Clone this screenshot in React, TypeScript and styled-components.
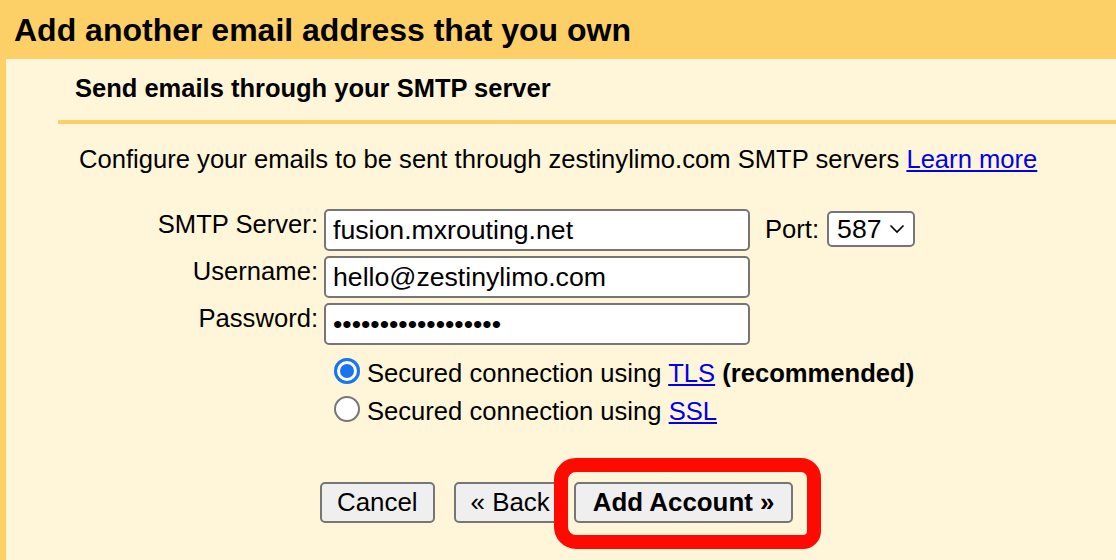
import React from "react";
import styled, { createGlobalStyle } from "styled-components";

const Global = createGlobalStyle`
  html, body { margin: 0; padding: 0; background: #fff6d9; }
  body { font-family: "Liberation Sans", Arial, sans-serif; color: #000; }
  * { box-sizing: border-box; }
`;

const Page = styled.div`
  width: 1116px;
  height: 560px;
  overflow: hidden;
  display: flex;
  flex-direction: column;
  background: #fff6d9;
`;

const TitleBar = styled.div`
  height: 59px;
  flex: none;
  background: #fcd067;
  padding: 2px 0 0 14px;
`;

const Title = styled.h1`
  margin: 0;
  font-size: 32px;
  line-height: 57px;
  font-weight: bold;
  white-space: nowrap;
`;

const Body = styled.div`
  flex: 1;
  border-left: 6px solid #fcd067;
  display: flex;
  flex-direction: column;
`;

const SectionHeader = styled.h2`
  margin: 0 0 0 52px;
  height: 65px;
  padding: 0 0 2px 17px;
  font-size: 25.5px;
  line-height: 59px;
  font-weight: bold;
  border-bottom: 4px solid #fcd067;
  white-space: nowrap;
`;

const Intro = styled.p`
  margin: 20px 0 0 73px;
  font-size: 25.6px;
  line-height: 30px;
  white-space: nowrap;
`;

const Link = styled.a`
  color: #0000ee;
  text-decoration: underline;
  text-underline-offset: 2px;
  cursor: pointer;
`;

const FormGrid = styled.div`
  margin-top: 35px;
  display: grid;
  grid-template-columns: 312px 426px auto;
  column-gap: 6px;
  row-gap: 5px;
  align-items: start;
`;

const Label = styled.label`
  font-size: 25.6px;
  line-height: 30px;
  text-align: right;
  white-space: nowrap;
`;

const TextInput = styled.input`
  width: 426px;
  height: 42px;
  margin: 0;
  padding: 0 7px;
  border: 2px solid #767676;
  border-radius: 5px;
  background: #fff;
  font-family: "Liberation Sans", Arial, sans-serif;
  font-size: 26.67px;
  color: #000;
  outline: none;
`;

const PortGroup = styled.div`
  display: flex;
  align-items: center;
  gap: 8px;
  margin: 2px 0 0 9px;
  font-size: 25.6px;
  height: 36px;
`;

const SelectBox = styled.div`
  width: 88px;
  height: 36px;
  display: flex;
  align-items: center;
  justify-content: space-between;
  padding: 0 8px 0 8px;
  border: 2px solid #767676;
  border-radius: 5px;
  background: #fff;
  font-size: 26.67px;
`;

const RadioList = styled.div`
  margin: 9px 0 0 328px;
  display: flex;
  flex-direction: column;
`;

const RadioRow = styled.label`
  display: flex;
  align-items: center;
  height: 38px;
  font-size: 25.6px;
  white-space: nowrap;
`;

const RadioDot = styled.span<{ $checked?: boolean }>`
  width: 26px;
  height: 26px;
  flex: none;
  margin: -4px 7px 0 0;
  border-radius: 50%;
  background: ${(p) => (p.$checked ? "#1a73f0" : "#fff")};
  border: ${(p) => (p.$checked ? "none" : "2.5px solid #767676")};
  box-shadow: ${(p) => (p.$checked ? "inset 0 0 0 3px #1a73f0, inset 0 0 0 6px #fff" : "none")};
`;

const RadioText = styled.span`
  line-height: 38px;
`;

const Strong = styled.b`
  font-weight: bold;
`;

const ButtonRow = styled.div`
  margin: 52px 0 0 314px;
  display: flex;
  align-items: center;
`;

const Button = styled.button<{ $bold?: boolean; $gap?: number }>`
  height: 41px;
  margin: 0 0 0 ${(p) => p.$gap ?? 0}px;
  padding: 0 ${(p) => (p.$bold ? 17 : 15)}px;
  border: 2px solid #767676;
  border-radius: 5px;
  background: #efefef;
  font-family: "Liberation Sans", Arial, sans-serif;
  font-size: 25.9px;
  font-weight: ${(p) => (p.$bold ? "bold" : "normal")};
  color: #000;
  white-space: nowrap;
  cursor: pointer;
`;

const Highlight = styled.span`
  position: relative;
  display: inline-flex;
  margin-left: 7px;
`;

const RedMark = styled.span`
  position: absolute;
  left: -20px;
  top: -24px;
  right: -28px;
  bottom: -26px;
  border: 14px solid #fe0a00;
  border-radius: 22px 20px 18px 22px;
  pointer-events: none;
`;

export default function App() {
  return (
    <>
      <Global />
      <Page>
        <TitleBar>
          <Title>Add another email address that you own</Title>
        </TitleBar>
        <Body>
          <SectionHeader>Send emails through your SMTP server</SectionHeader>
          <Intro>
            Configure your emails to be sent through zestinylimo.com SMTP servers <Link>Learn more</Link>
          </Intro>
          <FormGrid>
            <Label>SMTP Server:</Label>
            <TextInput readOnly value="fusion.mxrouting.net" />
            <PortGroup>
              <span>Port:</span>
              <SelectBox>
                <span>587</span>
                <svg width="16" height="10" viewBox="0 0 16 10">
                  <polyline points="1.5,1.5 8,8 14.5,1.5" fill="none" stroke="#000" strokeWidth="1.6" />
                </svg>
              </SelectBox>
            </PortGroup>
            <Label>Username:</Label>
            <TextInput readOnly value="hello@zestinylimo.com" />
            <span />
            <Label>Password:</Label>
            <TextInput readOnly type="password" value="xxxxxxxxxxxxxxxxxx" />
            <span />
          </FormGrid>
          <RadioList>
            <RadioRow>
              <RadioDot $checked />
              <RadioText>
                Secured connection using <Link>TLS</Link> <Strong>(recommended)</Strong>
              </RadioText>
            </RadioRow>
            <RadioRow>
              <RadioDot />
              <RadioText>
                Secured connection using <Link>SSL</Link>
              </RadioText>
            </RadioRow>
          </RadioList>
          <ButtonRow>
            <Button>Cancel</Button>
            <Button $gap={19}>« Back</Button>
            <Highlight>
              <Button $bold>Add Account »</Button>
              <RedMark />
            </Highlight>
          </ButtonRow>
        </Body>
      </Page>
    </>
  );
}
